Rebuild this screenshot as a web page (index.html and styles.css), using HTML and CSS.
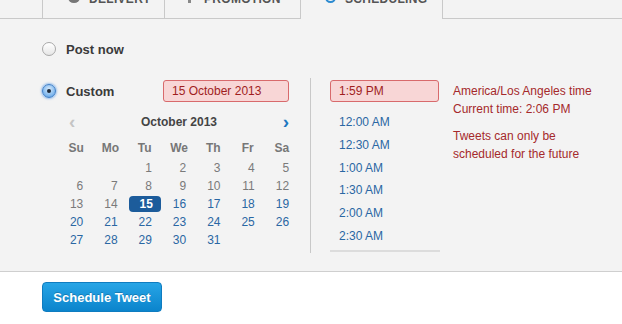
FILE: index.html
```html
<!DOCTYPE html>
<html>
<head>
<meta charset="utf-8">
<link rel="stylesheet" href="styles.css">
</head>
<body>
<div class="tabs">
  <div class="tab t1"><span class="ticon dot"></span><span class="tlabel">DELIVERY</span></div>
  <div class="tab t2"><span class="ticon bar"></span><span class="tlabel">PROMOTION</span></div>
  <div class="tab t3 active"><span class="ticon ring"></span><span class="tlabel">SCHEDULING</span></div>
</div>
<div class="panel">
  <div class="option now">
    <span class="radio"></span><span class="olabel">Post now</span>
  </div>
  <div class="custom">
    <div class="left">
      <div class="option crow">
        <span class="radio on"></span><span class="olabel">Custom</span>
        <div class="field datef">15 October 2013</div>
      </div>
      <div class="cal">
        <div class="calhead">
          <span class="arrow prev">&#8249;</span>
          <span class="month">October 2013</span>
          <span class="arrow next">&#8250;</span>
        </div>
        <div class="grid wd">
          <span>Su</span><span>Mo</span><span>Tu</span><span>We</span><span>Th</span><span>Fr</span><span>Sa</span>
        </div>
        <div class="grid days">
          <span></span><span></span><span class="p">1</span><span class="p">2</span><span class="p">3</span><span class="p">4</span><span class="p">5</span>
          <span class="p">6</span><span class="p">7</span><span class="p">8</span><span class="p">9</span><span class="p">10</span><span class="p">11</span><span class="p">12</span>
          <span class="p">13</span><span class="p">14</span><span class="sel">15</span><span class="f">16</span><span class="f">17</span><span class="f">18</span><span class="f">19</span>
          <span class="f">20</span><span class="f">21</span><span class="f">22</span><span class="f">23</span><span class="f">24</span><span class="f">25</span><span class="f">26</span>
          <span class="f">27</span><span class="f">28</span><span class="f">29</span><span class="f">30</span><span class="f">31</span><span></span><span></span>
        </div>
      </div>
    </div>
    <div class="times">
      <div class="field timef">1:59 PM</div>
      <ul class="tlist">
        <li>12:00 AM</li>
        <li>12:30 AM</li>
        <li>1:00 AM</li>
        <li>1:30 AM</li>
        <li>2:00 AM</li>
        <li>2:30 AM</li>
      </ul>
    </div>
    <div class="notes">
      <p>America/Los Angeles time<br>Current time: 2:06 PM</p>
      <p>Tweets can only be<br>scheduled for the future</p>
    </div>
  </div>
</div>
<div class="footer">
  <button class="btn">Schedule Tweet</button>
</div>
</body>
</html>
```
FILE: styles.css
```css
* { box-sizing: border-box; }
html, body { margin: 0; padding: 0; background: #fff; }
body {
  font-family: "Liberation Sans", Arial, Helvetica, sans-serif;
  color: #333;
  width: 622px;
  height: 324px;
  overflow: hidden;
}

/* tabs */
.tabs {
  height: 19px;
  background: #f3f3f3;
  border-bottom: 1px solid #c9c9c9;
  display: flex;
  padding-left: 42px;
}
.tab {
  height: 18px;
  border-left: 1px solid #c9c9c9;
  display: flex;
  align-items: flex-start;
  overflow: hidden;
}
.t1 { width: 122px; padding-left: 25px; }
.t2 { width: 136px; padding-left: 21px; }
.t3 { width: 143px; padding-left: 24px; border-right: 1px solid #c9c9c9; }
.tab.active { height: 19px; margin-bottom: -1px; background: #f3f3f3; }
.tlabel {
  font-size: 12px;
  font-weight: bold;
  color: #555;
  letter-spacing: 0.3px;
  line-height: 12px;
  margin-top: -7px;
  margin-left: 9px;
  white-space: nowrap;
}
.ticon {
  display: block;
  flex: none;
  margin-top: -8px;
}
.ticon.dot { width: 12px; height: 11px; border-radius: 50%; background: #777; }
.ticon.bar { width: 3px; height: 11px; background: #888; margin-left: 2px; margin-right: 4px; }
.ticon.ring { width: 11px; height: 11px; border-radius: 50%; border: 2px solid #2b8ad0; }

/* panel */
.panel {
  background: #f3f3f3;
  height: 253px;
  border-bottom: 1px solid #cfcfcf;
  padding: 20px 0 0 42px;
}
.option {
  display: flex;
  align-items: center;
}
.now { height: 20px; margin-bottom: 19px; }
.radio {
  width: 14px;
  height: 14px;
  border-radius: 50%;
  border: 1px solid #a8a8a8;
  background: linear-gradient(#ffffff, #e6e6e6);
  box-shadow: inset 0 1px 1px rgba(255,255,255,0.8);
  flex: none;
  position: relative;
}
.radio.on {
  border: 1px solid #3f7fc8;
  background: radial-gradient(circle at 50% 35%, #d6e9fb 0%, #7ab4ec 70%, #4e92dc 100%);
  box-shadow: 0 0 2px 1px rgba(80,150,230,0.55);
}
.radio.on::after {
  content: "";
  position: absolute;
  width: 4px;
  height: 4px;
  border-radius: 50%;
  background: #1d2a3a;
  left: 4px;
  top: 4px;
}
.olabel {
  font-size: 13px;
  font-weight: bold;
  color: #3a3a3a;
  margin-left: 10px;
}

.custom {
  display: flex;
  align-items: flex-start;
}
.left { width: 268px; padding-top: 2px; }
.crow { height: 22px; }
.crow .olabel { width: 97px; }
.field {
  height: 22px;
  border: 1px solid #d86a6c;
  border-radius: 3px;
  background: #f8d6d6;
  color: #a01e1e;
  font-size: 12px;
  line-height: 20px;
  padding-left: 8px;
}
.datef { width: 126px; }

/* calendar */
.cal { margin: 11px 0 0 17px; width: 240px; }
.calhead {
  height: 18px;
  display: flex;
  align-items: center;
  justify-content: space-between;
  padding: 0 10px 0 10px;
}
.month { font-size: 12px; font-weight: bold; color: #444; }
.arrow { font-size: 19px; font-weight: bold; line-height: 18px; }
.prev { color: #c4c4c4; }
.next { color: #1f78c1; }
.grid {
  display: grid;
  grid-template-columns: repeat(7, 34.3px);
}
.wd { margin-top: 8px; height: 18px; }
.wd span {
  text-align: center;
  font-size: 12px;
  font-weight: bold;
  color: #777;
  line-height: 18px;
}
.days { margin-top: 2px; grid-auto-rows: 18px; }
.days span {
  font-size: 12px;
  line-height: 16px;
  text-align: right;
  padding-right: 9px;
  margin: 1px 1px;
}
.days .p { color: #7a7a7a; }
.days .f { color: #2a67a3; }
.days .sel {
  background: #1c5c9b;
  color: #fff;
  font-weight: bold;
  border-radius: 4px;
  padding-right: 8px;
}

/* times */
.times {
  width: 143px;
  height: 175px;
  border-left: 1px solid #c8c8c8;
  padding: 2px 0 0 19px;
}
.timef { width: 109px; }
.tlist {
  list-style: none;
  margin: 9px 0 0 0;
  padding: 0 0 2px 0;
  width: 110px;
  border-bottom: 2px solid #dcdcdc;
}
.tlist li {
  height: 22.8px;
  line-height: 22.8px;
  font-size: 12px;
  color: #2a67a3;
  padding-left: 9px;
}

/* notes */
.notes {
  padding-top: 4px;
  color: #a5292b;
  font-size: 12px;
  line-height: 18px;
}
.notes p { margin: 0 0 9px 0; }

/* footer */
.footer { padding: 10px 0 0 42px; }
.btn {
  width: 120px;
  height: 30px;
  border: 1px solid #0f7cc0;
  border-radius: 4px;
  background: linear-gradient(#27a5e6, #0b84cc);
  color: #fff;
  font-family: "Liberation Sans", Arial, sans-serif;
  font-size: 13px;
  font-weight: bold;
  padding: 0;
  text-shadow: 0 -1px 0 rgba(0,0,0,0.2);
}
```
